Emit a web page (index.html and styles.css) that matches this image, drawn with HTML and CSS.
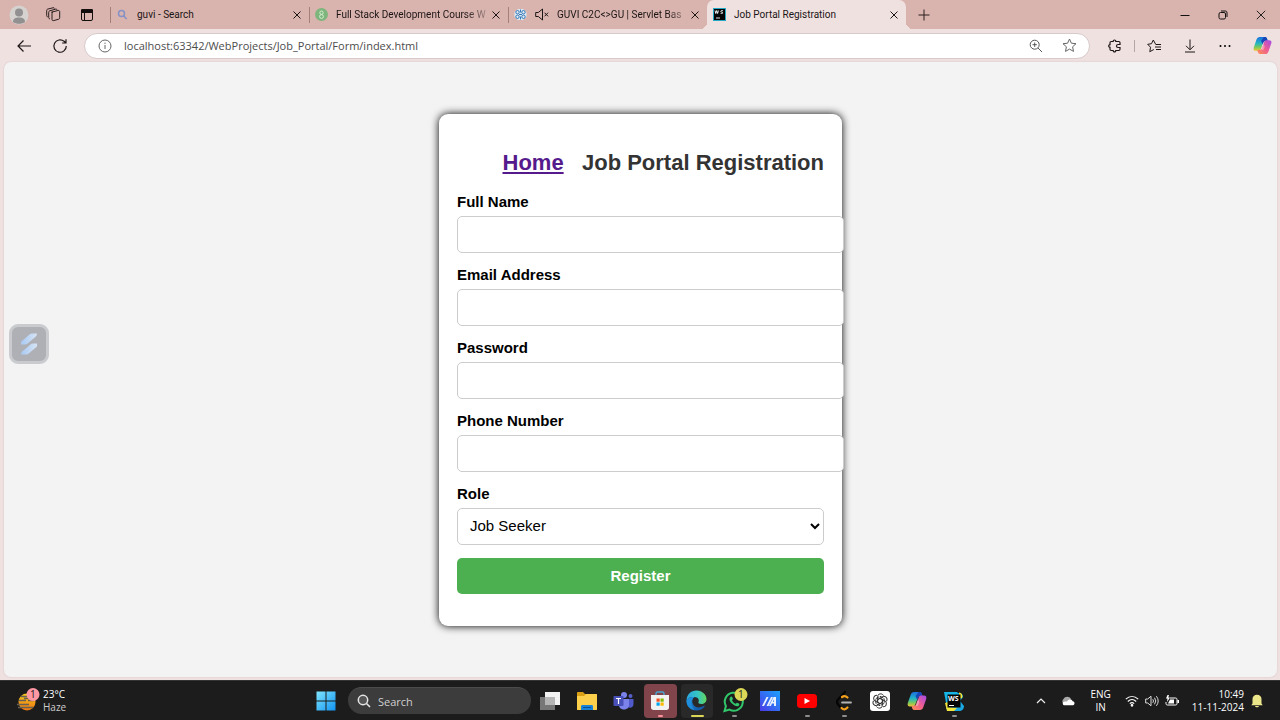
FILE: index.html
```html
<!DOCTYPE html>
<html lang="en">
<head>
<meta charset="utf-8">
<title>Job Portal Registration</title>
<link rel="stylesheet" href="styles.css">
</head>
<body>
<svg class="defs" aria-hidden="true">
  <defs>
    <linearGradient id="cpA" x1="0" y1="0" x2="0" y2="1"><stop offset="0" stop-color="#1b6fe0"/><stop offset=".45" stop-color="#23b5c4"/><stop offset=".75" stop-color="#7fc95a"/><stop offset="1" stop-color="#f4c430"/></linearGradient>
    <linearGradient id="cpB" x1="1" y1="0" x2="0" y2="1"><stop offset="0" stop-color="#a24be8"/><stop offset=".5" stop-color="#ee5c93"/><stop offset="1" stop-color="#ff9250"/></linearGradient>
    <linearGradient id="win" x1="0" y1="0" x2="1" y2="1"><stop offset="0" stop-color="#7fe6ff"/><stop offset="1" stop-color="#1192f0"/></linearGradient>
    <linearGradient id="edgeA" x1="0" y1="0" x2="1" y2="0"><stop offset="0" stop-color="#2ba5e0"/><stop offset=".55" stop-color="#35c5c4"/><stop offset="1" stop-color="#63d75c"/></linearGradient>
    <linearGradient id="edgeB" x1="0" y1="0" x2="1" y2="1"><stop offset="0" stop-color="#1f8fdd"/><stop offset="1" stop-color="#124f9f"/></linearGradient>
    <linearGradient id="blueSq" x1="1" y1="0" x2="0" y2="1"><stop offset="0" stop-color="#1aa2ff"/><stop offset="1" stop-color="#4b39e6"/></linearGradient>
    <linearGradient id="sun" x1="0" y1="0" x2="0" y2="1"><stop offset="0" stop-color="#f5c91e"/><stop offset="1" stop-color="#ee7410"/></linearGradient>
    <linearGradient id="ribbon" x1="0" y1="0" x2="1" y2="0"><stop offset="0" stop-color="#a9c9f2"/><stop offset="1" stop-color="#d6e4f5"/></linearGradient>
    <symbol id="copilot" viewBox="0 0 20 20">
      <path d="M7.2 1h5.3c1.2 0 1.900.6 2.300 1.800l.7 2.400h-2.200c-1.400 0-2.200.7-2.700 2.200L8.400 13.300C7.800 15 7 15.600 5.400 15.600H3C.9 15.600.2 14.100.8 12L3.700 3.700C4.300 1.900 5.300 1 7.200 1z" fill="url(#cpA)"/>
      <path d="M11.500 1h1c1.200 0 1.900.6 2.300 1.800l.7 2.400h-2.200c-1.400 0-2.200.7-2.700 2.200l-.5 1.400-1.600-3.800z" fill="#1846b8"/>
      <path d="M12.800 19H7.500c-1.200 0-1.900-.6-2.300-1.800l-.7-2.400h2.200c1.400 0 2.200-.7 2.700-2.200l2.200-5.900c.6-1.700 1.400-2.300 3-2.300H17c2.100 0 2.800 1.500 2.200 3.600l-2.900 8.300c-.6 1.800-1.600 2.700-3.500 2.700z" fill="url(#cpB)"/>
      <path d="M9.300 12.600l1.700-4.700 1.300 3.200-.8 2.300c-.5 1.200-1.300 1.600-2.500 1.600z" fill="#fff" opacity=".35"/>
    </symbol>
    <symbol id="x" viewBox="0 0 10 10"><path d="M1.500 1.500l7 7M8.500 1.500l-7 7" stroke="#1b1515" stroke-width="1" fill="none"/></symbol>
  </defs>
</svg>

<header class="tabstrip">
  <div class="strip-tools">
    <button class="tool" aria-label="Profile"><svg width="20" height="20" viewBox="0 0 20 20"><circle cx="10" cy="10" r="9.500" fill="#d5d2d0"/><circle cx="10" cy="7.500" r="4" fill="#929090"/><path d="M4 17c0-3.500 2.500-4.500 6-4.500s6 1 6 4.500c-3 2.400-9 2.400-12 0z" fill="#929090"/></svg></button>
    <button class="tool" aria-label="Workspaces"><svg width="15" height="15" viewBox="0 0 15 15" fill="none" stroke="#2a1f1f"><path d="M5.500 5.200l6.500-1.700c1-.2 1.500.1 1.700 1v6.200c0 .8-.3 1.200-1 1.500l-5 1.400c-1.100.2-1.600-.1-1.700-1.200V6.700c0-.8.2-1.300.8-1.500z"/><path d="M4 11.800c-1 0-1.300-.5-1.300-1.300V5.300c0-.8.3-1.200 1-1.500l5.800-1.600c.8-.2 1.300 0 1.600.8M1.800 10C.8 9.600.7 9.200.7 8.500V3.600c0-.8.2-1.200 1-1.500L7 .8c.9-.2 1.400 0 1.700.7"/></svg></button>
    <button class="tool" aria-label="Tab actions"><svg width="14" height="14" viewBox="0 0 14 14"><rect x="1.500" y="1.500" width="11" height="11" rx="1.500" fill="none" stroke="#130d0d"/><path d="M1 2.500C1 1.500 1.500 1 2.500 1h9c1 0 1.500.5 1.500 1.500V5H1zM4 5h1v8H4z" fill="#130d0d"/></svg></button>
  </div>
  <nav class="tabs" aria-label="Tabs">
    <div class="tab">
      <svg class="fav" viewBox="0 0 13 13" fill="none" stroke="#8492c5" stroke-width="1.500"><circle cx="5.500" cy="5.500" r="3"/><path d="M7.700 8l3 3"/></svg>
      <span class="tab-title">guvi - Search</span>
      <button class="close" aria-label="Close tab"><svg><use href="#x"/></svg></button>
    </div>
    <div class="tab">
      <svg class="fav" viewBox="0 0 13 13"><circle cx="6.500" cy="6.500" r="6.500" fill="#7eb57c"/><g fill="none" stroke="#d4efd2"><circle cx="6.500" cy="4.700" r="1.700"/><circle cx="6.500" cy="8.500" r="1.900"/></g></svg>
      <span class="tab-title fade">Full Stack Development Course W</span>
      <button class="close" aria-label="Close tab"><svg><use href="#x"/></svg></button>
    </div>
    <div class="tab">
      <svg class="fav" viewBox="0 0 13 13"><path d="M4 1h5l3.500 3v5L9 12H4L.5 9V4z" fill="#dce9f5"/><g fill="none" stroke="#3478b5"><circle cx="3.500" cy="4.200" r="1.700"/><circle cx="9.500" cy="4.200" r="1.700"/><circle cx="3.500" cy="8.800" r="1.700"/><circle cx="9.500" cy="8.800" r="1.700"/><path d="M6.500 1.500v3M6.500 8.500v3M5 6.500h3"/></g></svg>
      <button class="mute" aria-label="Unmute tab"><svg width="14" height="13" viewBox="0 0 14 13" fill="none" stroke="#1b1515"><path d="M.7 4.500h2.600L7.500 1v11L3.300 8.500H.7zM9.500 4.700l3.600 3.600M13.100 4.700L9.500 8.300"/></svg></button>
      <span class="tab-title fade">GUVI C2C&lt;&gt;GU | Servlet Bas</span>
      <button class="close" aria-label="Close tab"><svg><use href="#x"/></svg></button>
    </div>
    <div class="tab active">
      <svg class="fav" viewBox="0 0 13 13"><path d="M0 0h13v13H0z" fill="#23a9c6"/><path d="M1 1h11v11H1z" fill="#050505"/><path d="M2 2.500l.8 3 .9-3 .9 3 .8-3M10 2.800c-2.500-.8-2.800 1-1.500 1.300 2 .3 1.500 2-.9 1.200M3 10h4" stroke="#fff" fill="none" stroke-width=".9"/></svg>
      <span class="tab-title">Job Portal Registration</span>
      <button class="close" aria-label="Close tab"><svg><use href="#x"/></svg></button>
    </div>
    <button class="newtab" aria-label="New tab"><svg width="12" height="12" viewBox="0 0 12 12"><path d="M6 .5v11M.5 6h11" stroke="#2a1f1f"/></svg></button>
  </nav>
  <div class="winctl">
    <button aria-label="Minimize"><svg width="10" height="10" viewBox="0 0 10 10"><path d="M.5 5.500h9" stroke="#111"/></svg></button>
    <button aria-label="Restore"><svg width="10" height="10" viewBox="0 0 10 10" fill="none" stroke="#111"><rect x="1" y="2.500" width="6.500" height="6.500" rx="1.500"/><path d="M3 1h4c1.500 0 2 .5 2 2v4"/></svg></button>
    <button aria-label="Close window"><svg width="10" height="10" viewBox="0 0 10 10"><path d="M.8.8l8.400 8.400M9.200.8L.8 9.200" stroke="#111" stroke-width=".9"/></svg></button>
  </div>
</header>

<div class="toolbar">
  <button aria-label="Back"><svg width="16" height="16" viewBox="0 0 16 16" fill="none" stroke="#1d1616" stroke-width="1.200"><path d="M15 8H2M7.500 2.500L2 8l5.500 5.500"/></svg></button>
  <button aria-label="Refresh"><svg width="16" height="16" viewBox="0 0 16 16" fill="none" stroke="#1d1616" stroke-width="1.200"><path d="M14.300 8a6.200 6.200 0 1 1-2.200-4.700L14 5M14 1.200V5h-3.900"/></svg></button>
  <div class="address">
    <svg width="14" height="14" viewBox="0 0 14 14" fill="none" stroke="#666"><circle cx="7" cy="7" r="6"/><path d="M7 6v4M7 3.700V5"/></svg>
    <input class="url" type="text" aria-label="Address" value="localhost:63342/WebProjects/Job_Portal/Form/index.html">
    <button aria-label="Zoom"><svg width="14" height="14" viewBox="0 0 14 14" fill="none" stroke="#555"><circle cx="5.700" cy="5.700" r="4.500"/><path d="M9 9l4 4M5.700 3.500v4.400M3.500 5.700h4.400"/></svg></button>
    <button aria-label="Add to favorites"><svg width="15" height="15" viewBox="0 0 15 15" fill="none" stroke="#666"><path d="M7.500 1l1.900 4.200 4.600.5-3.400 3.100.9 4.600-4-2.300-4 2.300.9-4.600L1 5.700l4.600-.5z"/></svg></button>
  </div>
  <div class="toolbar-right">
    <button aria-label="Extensions"><svg width="14" height="14" viewBox="0 0 14 14" fill="none" stroke="#1d1616" stroke-width="1.200"><path d="M3.200 2.500h2c-.2-2 2.800-2 2.600 0h3c.8 0 1.200.5 1.200 1.200v1.800H10c-2 0-2 3 0 3h2v1.800c0 .8-.5 1.200-1.200 1.200h-3c.2 1.900-2.800 1.900-2.600 0h-2c-.8 0-1.200-.4-1.200-1.200V8.300c-1.700.2-1.700-2.800 0-2.600v-2c0-.8.4-1.200 1.200-1.200z"/></svg></button>
    <span class="sep"></span>
    <button aria-label="Favorites"><svg width="15" height="14" viewBox="0 0 15 14" fill="none" stroke="#1d1616"><path d="M8.500 5L6.300 1 4.500 4.700.7 5.300l2.800 2.900-.7 4.500 4-2.200M8.500 5.500H14M8 8h6M9 10.500h5"/></svg></button>
    <button aria-label="Downloads"><svg width="14" height="14" viewBox="0 0 14 14" fill="none" stroke="#1d1616"><path d="M7 .5v10M3 6.800l4 4 4-4M2 13h10"/></svg></button>
    <button aria-label="More"><svg width="14" height="14" viewBox="0 0 14 14"><circle cx="2.500" cy="7" r="1"/><circle cx="7" cy="7" r="1"/><circle cx="11.500" cy="7" r="1"/></svg></button>
    <button aria-label="Copilot"><svg width="19" height="19"><use href="#copilot"/></svg></button>
  </div>
</div>

<main class="page">
  <button class="floater" aria-label="Assistant"><svg width="24" height="26" viewBox="0 0 24 26" fill="url(#ribbon)"><path d="M4 13.500V10.800L12.500 3.500C13.300 2.800 14 2.500 15 2.500h5c-.2 1.800-.7 2.700-2 3.800L10.500 12.500c-.8.700-1.500 1-2.500 1z"/><path d="M4 23.500c.2-1.800.8-2.800 2-3.800l7.500-6.200c.8-.7 1.500-1 2.500-1h4v3l-8 6.800c-1 .9-1.700 1.200-3 1.200z"/></svg></button>
  <form class="card">
    <h2><a href="#">Home</a>&nbsp;&nbsp; Job Portal Registration</h2>
    <label for="name">Full Name</label>
    <input id="name" type="text">
    <label for="email">Email Address</label>
    <input id="email" type="email">
    <label for="pass">Password</label>
    <input id="pass" type="password">
    <label for="phone">Phone Number</label>
    <input id="phone" type="tel">
    <label for="role">Role</label>
    <select id="role"><option>Job Seeker</option><option>Employer</option></select>
    <button class="register" type="button">Register</button>
  </form>
</main>

<footer class="taskbar">
  <div class="weather">
    <svg width="24" height="26" viewBox="0 0 24 26"><circle cx="11" cy="14" r="8.500" fill="url(#sun)"/><path d="M5 8.500h8M3 12.500h7M12 12.500h6M1 16.500h12M2 19.500h15M8 10.500h9" stroke="#686052" stroke-width="1.400"/><circle cx="17" cy="6.500" r="6.500" fill="#ff98a3"/><text x="14" y="10" class="badge-num">1</text></svg>
    <div><div>23°C</div><div class="dim">Haze</div></div>
  </div>
  <div class="center">
    <button class="start" aria-label="Start"><svg width="20" height="20" viewBox="0 0 20 20" fill="url(#win)"><path d="M.5.5h9v9h-9zM10.500.5h9v9h-9zM.5 10.500h9v9h-9zM10.500 10.500h9v9h-9z"/></svg></button>
    <div class="search">
      <svg width="14" height="14" viewBox="0 0 14 14"><circle cx="6" cy="6" r="4.700" fill="#555" stroke="#e5e5e5" stroke-width="1.500"/><path d="M9.500 9.500l3.500 3.500" stroke="#e5e5e5" stroke-width="1.600"/></svg>
      <input type="text" placeholder="Search" aria-label="Search">
    </div>
    <div class="apps">
      <button class="app" aria-label="Task view"><svg width="20" height="20" viewBox="0 0 20 20"><path d="M5 1h15v13H5z" fill="#f2f2f2"/><path d="M0 6h15v13H0z" fill="#777"/><path d="M5 6h10v8H5z" fill="#b5b5b5"/></svg></button>
      <button class="app" aria-label="File Explorer"><svg width="22" height="20" viewBox="0 0 22 20"><path d="M1 2c0-.6.4-1 1-1h5l2 2h11c.6 0 1 .4 1 1v14c0 .6-.4 1-1 1H2c-.6 0-1-.4-1-1z" fill="#dba014"/><path d="M1 5h7l2-2h10c.6 0 1 .4 1 1v14c0 .6-.4 1-1 1H2c-.6 0-1-.4-1-1z" fill="#fdd04b"/><path d="M5 19v-3.500C5 14.500 5.500 14 6.500 14h9c1 0 1.500.5 1.500 1.500V19z" fill="#1683d8"/><path d="M7 16.500h8" stroke="#0a4f91"/></svg></button>
      <button class="app" aria-label="Teams"><svg width="21" height="20" viewBox="0 0 21 20"><circle cx="11" cy="4" r="3" fill="#7b83eb"/><circle cx="17.500" cy="5" r="2" fill="#5560c8"/><path d="M13 8h7.500v5c0 3-3 5-6 3z" fill="#5059c9"/><path d="M6 8h10v6c0 6-10 6-10 0z" fill="#7b83eb"/><rect x=".5" y="5" width="10" height="10" rx="1" fill="#4850b8"/><path d="M3 7.500h5M5.500 7.500V13" stroke="#fff" stroke-width="1.200"/></svg></button>
      <button class="app store" aria-label="Store"><svg width="20" height="20" viewBox="0 0 20 20"><path d="M6 5V2.500C6 1.500 6.500 1 7.500 1h5c1 0 1.500.5 1.500 1.500V5" fill="none" stroke="#46a5d2" stroke-width="1.400"/><path d="M1 4h18v12.500c0 1.500-1 2.500-2.500 2.500h-13C2 19 1 18 1 16.500z" fill="#f3f1f1"/><path d="M6.500 7.500h3.200v3.200H6.500z" fill="#f25022"/><path d="M10.500 7.500h3.200v3.200h-3.200z" fill="#7fba00"/><path d="M6.500 11.500h3.200v3.200H6.500z" fill="#00a4ef"/><path d="M10.500 11.500h3.200v3.200h-3.200z" fill="#ffb900"/></svg><i class="dot pink"></i></button>
      <button class="app edge" aria-label="Edge"><svg width="21" height="21" viewBox="0 0 21 21"><path d="M.5 11C.5 4.500 5 .5 10.500.5c6 0 10 4.500 10 8.500 0 3.500-2.500 5-5 5-2.300 0-3.700-.8-3-2 1-2-.3-5-4-5C4 7 1 8.500.5 11z" fill="url(#edgeA)"/><path d="M.5 11C1 8.500 4 7 8.500 7 6 8.500 5.500 12 7.500 15c2 2.800 6 3.200 10.500.8.6-.3 1 .1.6.6C17 19 14 20.500 10.500 20.500 5 20.500.5 16.500.5 11z" fill="url(#edgeB)"/><path d="M.5 11C1 8.500 4 7 8.500 7 5 9 4 14 8.500 20.300 4 19.500.5 16 .5 11z" fill="#2196e3" opacity=".7"/></svg><i class="dot yellow"></i></button>
      <button class="app" aria-label="WhatsApp"><svg width="28" height="26" viewBox="0 0 28 26"><path d="M4.500 23l1.400-5a9 9 0 1 1 3.600 3.600z" fill="none" stroke="#32c66b" stroke-width="2"/><path d="M10.500 9c.8-.8 1.500-.5 1.800.3l.7 1.700-1 1.300c.8 1.700 2 2.800 3.700 3.500l1.200-1.100 2 .9c.8.4.6 1.400-.1 2.100C16 20 9 14 9.500 11c0-.8.4-1.500 1-2z" fill="#32c66b"/><circle cx="21" cy="6.500" r="6.500" fill="#dcd657"/><text x="18" y="10" class="badge-num">1</text></svg><i class="dot"></i></button>
      <button class="app" aria-label="MyASUS"><svg width="20" height="20" viewBox="0 0 20 20"><path d="M0 0h20v20H0z" fill="url(#blueSq)"/><path d="M2 15L6.500 6h2L4 15zM6.500 15L11 6h2L8.500 15zM13.500 6H16v9h-2v-2.500h-3l1-1.800h2V8.500L10.800 15H9z" fill="#e9f0ff"/></svg></button>
      <button class="app" aria-label="YouTube"><svg width="20" height="20" viewBox="0 0 20 20"><rect y="3" width="20" height="14" rx="3.500" fill="#f00"/><path d="M7.500 7l5.500 3-5.500 3z" fill="#fff"/></svg><i class="dot"></i></button>
      <button class="app" aria-label="LeetCode"><svg width="20" height="22" viewBox="0 0 20 22" fill="none" stroke-width="2.200" stroke-linecap="round"><path d="M11 2L4.500 9c-2 2-2 4 0 6l2 2.500" stroke="#050505"/><path d="M8 7c2-1.500 3.500-1.500 5.500.5M7.500 18c2 2 4 1.800 6-.5" stroke="#f5a01a"/><path d="M8 12.500h9" stroke="#b3b3b3" stroke-width="1.800"/></svg><i class="dot"></i></button>
      <button class="app" aria-label="ChatGPT"><svg width="20" height="20" viewBox="0 0 20 20"><rect width="20" height="20" rx="3" fill="#fff"/><g fill="none" stroke="#333"><path id="petal" d="M10 7.300L7.600 8.700V5.500c0-1 .5-1.700 1.300-2.200 1.700-.9 3.600-.4 4.600 1.200M7.600 8.700v2.700M10 5.200l3.500 2"/><use href="#petal" transform="rotate(60 10 10)"/><use href="#petal" transform="rotate(120 10 10)"/><use href="#petal" transform="rotate(180 10 10)"/><use href="#petal" transform="rotate(240 10 10)"/><use href="#petal" transform="rotate(300 10 10)"/></g></svg></button>
      <button class="app" aria-label="Copilot"><svg width="20" height="20"><use href="#copilot"/></svg></button>
      <button class="app" aria-label="WebStorm"><svg width="20" height="20" viewBox="0 0 20 20"><path d="M0 1h13l3 3-1 13H3z" fill="#16b6e8"/><path d="M14 2c3-.5 5 1 5 4l-3 4 4 5c0 3-2 5-5 5H4l-2-3 9-4z" fill="#1aa9e2"/><path d="M15 1.500c3 .5 4 3 3 5.500l-3 1zM1 12l3-1v5l9 1-3 3H3z" fill="#f3e63a"/><path d="M3.500 3.500h13v13h-13z" fill="#050505"/><text x="4" y="10" class="ws">WS</text><path d="M5 14.500h5" stroke="#fff"/></svg><i class="dot"></i></button>
    </div>
  </div>
  <div class="tray">
    <button aria-label="Hidden icons"><svg width="10" height="10" viewBox="0 0 10 10" fill="none" stroke="#eee" stroke-width="1.200"><path d="M1 7l4-4 4 4"/></svg></button>
    <svg class="cloud" width="14" height="10" viewBox="0 0 14 10"><path d="M3 8a3 3 0 0 1-.5-5C4 0 8.500 0 10 3l-4 5z" fill="#a8a8a8"/><path d="M3 9.200c-2-1-1.500-3.700 1-3.700h2C7.500 3 11 3 11.600 5.300c2.300 0 2.600 3.300.4 3.900z" fill="#fff"/></svg>
    <div class="lang"><div>ENG</div><div>IN</div></div>
    <div class="status">
      <svg width="14" height="12" viewBox="0 0 14 12" fill="none" stroke="#fff" stroke-width="1.100"><path d="M.8 4.200c3.800-3.600 8.600-3.600 12.400 0M2.800 6.500c2.600-2.500 5.800-2.500 8.400 0M4.800 8.600c1.500-1.300 2.900-1.300 4.400 0"/><circle cx="7" cy="10.300" r=".8" fill="#fff"/></svg>
      <svg width="14" height="12" viewBox="0 0 14 12" fill="none" stroke="#ddd"><path d="M.7 4h2L6 1.200v9.600L2.700 8h-2zM7.800 4.200q1.400 1.800 0 3.600M9.500 2.700q2.600 3.300 0 6.600M11.400 1.200q3.600 4.800 0 9.600"/></svg>
      <svg width="14" height="12" viewBox="0 0 14 12"><path d="M5 3h5.500c1 0 1.500.5 1.500 1.500v4c0 1-.5 1.500-1.500 1.500h-8C1.500 10 1 9.500 1 8.500V7" fill="none" stroke="#fff"/><path d="M5 4.500h4v4H3zM12.500 5H14v3h-1.500zM2.500 0L1 3.500h1.500L2 7l3-4.500H3.300L4 0z" fill="#fff"/></svg>
    </div>
    <div class="clock"><div>10:49</div><div>11-11-2024</div></div>
    <button aria-label="Notifications"><svg width="12" height="14" viewBox="0 0 12 14" fill="#ece68a"><path d="M1.500 9.500V5.200C1.500 2.500 3.400.8 6 .8s4.500 1.700 4.500 4.400v4.300l1.200 1.700H.3zM4 12h4c-.3 1.800-3.700 1.800-4 0z"/></svg></button>
  </div>
</footer>
</body>
</html>
```
FILE: styles.css
```css
* { box-sizing: border-box; }
body {
  margin: 0;
  min-height: 100vh;
  display: flex;
  flex-direction: column;
  background: #f0e1e1;
  font-family: "Open Sans", "Noto Sans", sans-serif;
  font-size: 10px;
  color: #1b1515;
}
button {
  border: 0;
  padding: 0;
  background: none;
  font: inherit;
  display: flex;
  align-items: center;
  justify-content: center;
}
svg { display: block; flex: none; }
.defs { position: absolute; width: 0; height: 0; }

/* Tab strip */
.tabstrip {
  display: flex;
  height: 29px;
  background: #d9b3ae;
}
.strip-tools {
  display: flex;
  align-items: center;
  width: 110px;
  padding-left: 2px;
}
.tool { width: 34px; }
.tabs { flex: 1; display: flex; align-items: center; min-width: 0; }
.tab {
  flex: 0 1 199px;
  min-width: 0;
  height: 29px;
  display: flex;
  align-items: center;
  gap: 8px;
  padding: 0 7px 0 6px;
  position: relative;
}
.tab::before {
  content: "";
  position: absolute;
  left: 0;
  top: 7px;
  width: 1px;
  height: 16px;
  background: #a27f7b;
}
.tab.active { background: #f0e1e1; border-radius: 7px 7px 0 0; }
.tab.active::before,
.tab.active::after {
  content: "";
  position: absolute;
  top: auto;
  bottom: 0;
  width: 7px;
  height: 7px;
}
.tab.active::before { left: -7px; background: radial-gradient(circle at 0 0, #d9b3ae 7px, #f0e1e1 7px); }
.tab.active::after { right: -7px; background: radial-gradient(circle at 100% 0, #d9b3ae 7px, #f0e1e1 7px); }
.fav { width: 13px; height: 13px; }
.tab-title {
  flex: 1;
  min-width: 0;
  margin-right: -4px;
  overflow: hidden;
  white-space: nowrap;
  font-family: Roboto, "Open Sans", sans-serif;
}
.fade { mask-image: linear-gradient(to right, #000 85%, transparent 105%); }
.close svg { width: 10px; height: 10px; }
.newtab { margin-left: 12px; }
.winctl { display: flex; }
.winctl button { width: 38px; }

/* Toolbar */
.toolbar {
  display: flex;
  align-items: center;
  height: 33px;
  padding: 0 8px 0 16px;
  gap: 20px;
}
.address {
  flex: 1;
  min-width: 0;
  height: 26px;
  margin-left: -4px;
  padding: 0 12px 0 13px;
  display: flex;
  align-items: center;
  gap: 19px;
  background: #fff;
  border: 1px solid #d8c9ca;
  border-radius: 13px;
}
.url {
  flex: 1;
  min-width: 0;
  margin-left: -7px;
  padding: 0;
  border: 0;
  outline: 0;
  background: none;
  font: 11px "Open Sans", "Noto Sans", sans-serif;
  color: #4c4c4c;
}
.toolbar-right { display: flex; align-items: center; gap: 21px; margin-left: -2px; }
.sep { width: 1px; height: 12px; margin: 0 -9px; background: #b5a5a5; }

/* Registration page */
.page {
  flex: 1;
  position: relative;
  display: flex;
  align-items: center;
  justify-content: center;
  margin: 0 3px 3px 4px;
  background: #f3f3f3;
  border-radius: 7px;
  box-shadow: 0 0 2px #d5bfc0;
  font-family: "Liberation Sans", Arial, sans-serif;
  font-size: 15px;
}
.floater {
  position: absolute;
  left: 5px;
  top: 262px;
  width: 40px;
  height: 40px;
  background: #aeb0b5;
  border: 3px solid #c9cbce;
  border-radius: 9px;
}
.card {
  width: 403px;
  padding: 18px 18px 32px;
  background: #fff;
  border-radius: 9px;
  box-shadow: 0 0 9px #000;
}
.card h2 {
  margin: 18px 0;
  font-size: 22px;
  line-height: 25px;
  text-align: right;
  color: #333;
}
.card h2 a { color: #551a8b; }
.card label {
  display: block;
  margin-bottom: 5px;
  line-height: 18px;
  font-weight: bold;
  color: #000;
}
.card input,
.card select {
  display: block;
  width: 100%;
  height: 37px;
  margin: 0 0 13px;
  padding: 9px;
  border: 1px solid #ccc;
  border-radius: 5px;
  background: #fff;
  font: inherit;
  color: #000;
}
.card input { box-sizing: content-box; height: 17px; }
.card select { padding: 7px 8px 10px; }
.register {
  width: 100%;
  height: 36px;
  border-radius: 5px;
  background: #4caf50;
  color: #fff;
  font-weight: bold;
}

/* Taskbar */
.taskbar {
  display: grid;
  grid-template-columns: 1fr auto 1fr;
  align-items: center;
  height: 40px;
  background: #1c1c1c;
  border-top: 1px solid #333;
  color: #fff;
  line-height: 13px;
}
.weather { display: flex; align-items: center; gap: 3px; padding-left: 16px; }
.dim { color: #ccc; }
.badge-num { font: 10px "Open Sans", sans-serif; fill: #222; }
.ws { font: bold 7px "Open Sans", sans-serif; fill: #fff; }
.center { display: flex; align-items: center; }
.start { width: 36px; margin-right: 4px; }
.search {
  display: flex;
  align-items: center;
  gap: 7px;
  width: 183px;
  height: 27px;
  margin-right: 1px;
  padding: 0 9px;
  border-radius: 14px;
  background: #3c3c3c;
  border-top: 1px solid #4b4b4b;
}
.search input {
  flex: 1;
  min-width: 0;
  padding: 0;
  border: 0;
  background: none;
  font: 11px "Open Sans", "Noto Sans", sans-serif;
  color: #fff;
}
.search input::placeholder { color: #cfcfcf; }
.apps { display: grid; grid-template-columns: repeat(12, 1fr); width: 440px; }
.app {
  position: relative;
  height: 34px;
  margin: 0 2px;
  border-radius: 4px;
}
.store { background: #81444a; }
.edge { background: #292929; }
.dot {
  position: absolute;
  left: 50%;
  bottom: 1px;
  width: 5px;
  height: 2px;
  margin-left: -2px;
  border-radius: 1px;
  background: #8d8d8d;
}
.pink { background: #ff929c; }
.yellow { width: 13px; margin-left: -6px; background: #dcd657; }
.tray {
  display: flex;
  align-items: center;
  justify-content: flex-end;
  padding-right: 17px;
}
.cloud { margin-left: 15px; }
.lang { text-align: center; margin: 0 14px 0 15px; }
.status { display: flex; gap: 6px; }
.clock { text-align: right; margin: 0 7px 0 13px; }
```
